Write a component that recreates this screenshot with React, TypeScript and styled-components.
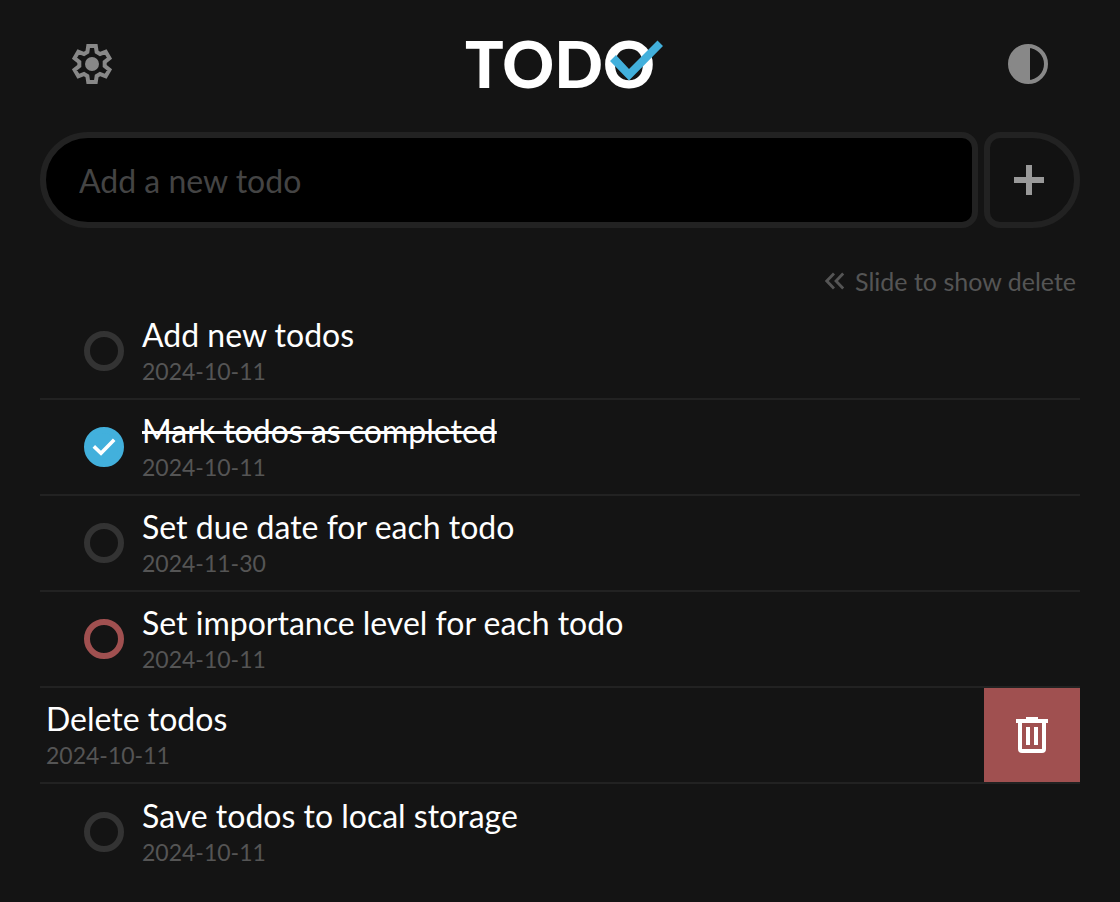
import React, { useState } from "react";
import styled, { createGlobalStyle } from "styled-components";

const color = {
  page: "#141414",
  field: "#000",
  line: "#222",
  ring: "#333",
  hint: "#444",
  muted: "#555",
  icon: "#888",
  plus: "#999",
  text: "#fff",
  accent: "#42b0dc",
  danger: "#a05050",
};

const GlobalStyle = createGlobalStyle`
  *, *::before, *::after { box-sizing: border-box; }
  body {
    margin: 0;
    background: ${color.page};
    color: ${color.text};
    font-family: Lato, "Liberation Sans", sans-serif;
  }
  button, input { font: inherit; }
`;

const Page = styled.main`
  padding: 0 40px 22px;
`;

const Header = styled.header`
  display: flex;
  align-items: center;
  justify-content: space-between;
  height: 128px;
  padding: 0 28px;
`;

const IconButton = styled.button`
  display: grid;
  place-items: center;
  width: 48px;
  height: 48px;
  padding: 0;
  border: 0;
  background: none;
  color: ${color.icon};
  cursor: pointer;
`;

const Brand = styled.h1`
  display: flex;
  margin: 0;
`;

const Form = styled.form`
  display: flex;
  gap: 6px;
  height: 96px;
  margin-top: 4px;
`;

const NewTodo = styled.input`
  flex: 1;
  min-width: 0;
  padding: 0 33px;
  border: 6px solid ${color.line};
  border-radius: 48px 16px 16px 48px;
  background: ${color.field};
  color: ${color.text};
  font-size: 32px;
  outline: none;
  &::placeholder {
    color: ${color.hint};
    opacity: 1;
  }
`;

const AddButton = styled.button`
  display: grid;
  place-items: center;
  width: 96px;
  padding: 0 6px 0 0;
  border: 6px solid ${color.line};
  border-radius: 16px 48px 48px 16px;
  background: #121212;
  color: ${color.plus};
  cursor: pointer;
`;

const Hint = styled.p`
  display: flex;
  align-items: center;
  justify-content: flex-end;
  gap: 10px;
  margin: 35px 0 5px;
  padding-right: 4px;
  color: ${color.muted};
  font-size: 25px;
  line-height: 36px;
`;

const List = styled.ul`
  margin: 0;
  padding: 0;
  list-style: none;
`;

const Row = styled.li<{ $open?: boolean }>`
  display: flex;
  align-items: center;
  gap: 18px;
  height: 96px;
  padding-left: ${(p) => (p.$open ? 6 : 44)}px;
  border-bottom: 2px solid ${color.line};
  &:last-child {
    border-bottom: 0;
  }
`;

const Check = styled.span`
  display: grid;
  flex: none;
  width: 40px;
  height: 40px;
  & > * {
    grid-area: 1 / 1;
  }
  svg {
    pointer-events: none;
  }
`;

const Box = styled.input<{ $important?: boolean }>`
  appearance: none;
  width: 40px;
  height: 40px;
  margin: 0;
  border: 6px solid ${(p) => (p.$important ? color.danger : color.ring)};
  border-radius: 50%;
  cursor: pointer;
  &:checked {
    border-color: ${color.accent};
    background: ${color.accent};
  }
`;

const Body = styled.div`
  flex: 1;
  min-width: 0;
  padding-bottom: 2px;
`;

const Title = styled.label<{ $done?: boolean }>`
  display: block;
  font-size: 32px;
  line-height: 42px;
  text-decoration: ${(p) => (p.$done ? "line-through 3px" : "none")};
`;

const DueDate = styled.time`
  display: block;
  color: ${color.muted};
  font-size: 23px;
  line-height: 30px;
`;

const DeleteButton = styled.button`
  display: grid;
  place-items: center;
  align-self: stretch;
  width: 96px;
  padding: 0;
  border: 0;
  background: ${color.danger};
  color: ${color.text};
  cursor: pointer;
`;

// One tooth of the gear, repeated six times around the centre.
const tooth = [[-6.5, -13.2], [-5.5, -20], [5.5, -20], [6.5, -13.2]];
const gearPoints = [0, 1, 2, 3, 4, 5]
  .flatMap((k) => {
    const a = (k * Math.PI) / 3;
    return tooth.map(
      ([x, y]) =>
        `${(x * Math.cos(a) - y * Math.sin(a)).toFixed(2)},${(x * Math.sin(a) + y * Math.cos(a)).toFixed(2)}`
    );
  })
  .join(" ");

const GearIcon = () => (
  <svg width="40" height="40" viewBox="-20 -20 40 40" overflow="visible" aria-hidden="true">
    <clipPath id="gear">
      <polygon points={gearPoints} />
    </clipPath>
    <polygon points={gearPoints} clipPath="url(#gear)" fill="none" stroke="currentColor" strokeWidth="8" />
    <circle r="7" fill="currentColor" />
  </svg>
);

const ContrastIcon = () => (
  <svg width="40" height="40" viewBox="-20 -20 40 40" aria-hidden="true">
    <circle r="18" fill="none" stroke="currentColor" strokeWidth="4" />
    <path d="M2 -18H0A18 18 0 0 0 0 18H2Z" fill="currentColor" />
  </svg>
);

const PlusIcon = () => (
  <svg width="30" height="30" viewBox="0 0 30 30" aria-hidden="true">
    <path d="M15 0V30M0 15H30" stroke="currentColor" strokeWidth="6" />
  </svg>
);

const SlideIcon = () => (
  <svg width="20" height="18" viewBox="0 0 20 18" aria-hidden="true">
    <path d="M9 1.5L1.800 9L9 16.5M18.200 1.5L11 9L18.200 16.5" fill="none" stroke="currentColor" strokeWidth="2.8" />
  </svg>
);

const TickIcon = () => (
  <svg width="40" height="40" viewBox="0 0 40 40" aria-hidden="true">
    <path d="M9.8 19.4L17 26.2L30.2 12.8" fill="none" stroke="#fff" strokeWidth="3.6" />
  </svg>
);

const TrashIcon = () => (
  <svg width="32" height="36" viewBox="0 0 32 36" fill="currentColor" aria-hidden="true">
    <path d="M10 0H22V2H32V6H30V32Q30 36 26 36H6Q2 36 2 32V6H0V2H10ZM6 6V32H26V6Z" fillRule="evenodd" />
    <path d="M10 10H14V28H10ZM18 10H22V28H18Z" />
  </svg>
);

const Logo = () => (
  <svg width="188" height="52" viewBox="0 0 188 52" overflow="visible" role="img" aria-label="TODO">
    <text x="-1" y="50" fill="#fff" fontSize="64" fontWeight="900">
      TODO
    </text>
    <path d="M144 23L150 17L163 31L191.5 2.5L197 8L163 42.5Z" fill={color.accent} />
  </svg>
);

type Todo = { title: string; due: string; done?: boolean; important?: boolean; open?: boolean };

const initial: Todo[] = [
  { title: "Add new todos", due: "2024-10-11" },
  { title: "Mark todos as completed", due: "2024-10-11", done: true },
  { title: "Set due date for each todo", due: "2024-11-30" },
  { title: "Set importance level for each todo", due: "2024-10-11", important: true },
  { title: "Delete todos", due: "2024-10-11", open: true },
  { title: "Save todos to local storage", due: "2024-10-11" },
];

export default function App() {
  const [todos, setTodos] = useState(initial);
  const toggle = (i: number) =>
    setTodos(todos.map((t, n) => (n === i ? { ...t, done: !t.done } : t)));

  return (
    <>
      <GlobalStyle />
      <Page>
        <Header>
          <IconButton aria-label="Settings"><GearIcon /></IconButton>
          <Brand><Logo /></Brand>
          <IconButton aria-label="Toggle theme"><ContrastIcon /></IconButton>
        </Header>
        <Form onSubmit={(e) => e.preventDefault()}>
          <NewTodo type="text" placeholder="Add a new todo" aria-label="Add a new todo" />
          <AddButton aria-label="Add"><PlusIcon /></AddButton>
        </Form>
        <Hint><SlideIcon />Slide to show delete</Hint>
        <List>
          {todos.map((t, i) => (
            <Row key={t.title} $open={t.open}>
              {!t.open && (
                <Check>
                  <Box
                    type="checkbox"
                    id={`todo-${i}`}
                    checked={!!t.done}
                    $important={t.important}
                    onChange={() => toggle(i)}
                  />
                  {t.done && <TickIcon />}
                </Check>
              )}
              <Body>
                <Title as={t.open ? "span" : "label"} htmlFor={t.open ? undefined : `todo-${i}`} $done={t.done}>
                  {t.title}
                </Title>
                <DueDate dateTime={t.due}>{t.due}</DueDate>
              </Body>
              {t.open && (
                <DeleteButton
                  aria-label={`Delete ${t.title}`}
                  onClick={() => setTodos(todos.filter((_, n) => n !== i))}
                >
                  <TrashIcon />
                </DeleteButton>
              )}
            </Row>
          ))}
        </List>
      </Page>
    </>
  );
}
